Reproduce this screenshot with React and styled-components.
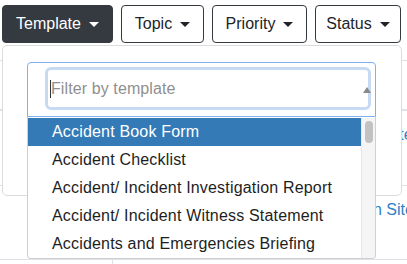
import React from "react";
import styled, { createGlobalStyle } from "styled-components";

const GlobalStyle = createGlobalStyle`
  * { box-sizing: border-box; }
  html, body { margin: 0; padding: 0; background: #fff; }
  body { font-family: "Liberation Sans", Arial, sans-serif; font-size: 16px; color: #212529; }
`;

const Page = styled.div`
  position: relative;
  width: 407px;
  height: 264px;
  overflow: hidden;
  background: #fff;
`;

const Toolbar = styled.div`
  display: flex;
  gap: 8px;
  padding: 5px 0 0 2px;
  height: 43px;
`;

const FilterButton = styled.button`
  display: flex;
  align-items: center;
  justify-content: center;
  width: ${(p) => p.$w}px;
  height: 38px;
  padding: 0;
  border: 1px solid #343a40;
  border-radius: 4px;
  background: ${(p) => (p.$active ? "#343a40" : "#fff")};
  color: ${(p) => (p.$active ? "#fff" : "#212529")};
  font-family: "Liberation Sans", Arial, sans-serif;
  font-size: 16px;
  line-height: 1;
`;

const Caret = styled.span`
  display: inline-block;
  margin-left: 8px;
  width: 0;
  height: 0;
  border-left: 5px solid transparent;
  border-right: 5px solid transparent;
  border-top: 5px solid currentColor;
`;

const Table = styled.div`
  display: flex;
  flex-direction: column;
`;

const Row = styled.div`
  display: grid;
  grid-template-columns: 112px 180px 1fr;
  height: ${(p) => p.$h}px;
  border-bottom: ${(p) => p.$b ?? 1}px solid #dee2e6;
`;

const Cell = styled.div`
  white-space: nowrap;
  padding: 15px 0 0 ${(p) => p.$indent || 0}px;
  border-left: ${(p) => (p.$divider ? "1px solid #dee2e6" : "none")};
  height: 100%;
`;

const LinkText = styled.span`
  color: #2f7fc6;
  font-size: 16px;
  line-height: 18px;
`;

const FilterPanel = styled.div`
  position: absolute;
  top: 45px;
  left: 2px;
  width: 400px;
  height: 151px;
  padding: 16px 0 0 24px;
  background: #fff;
  border: 1px solid #dcdcdc;
  border-radius: 5px;
  z-index: 5;
`;

const Select = styled.div`
  position: relative;
  width: 349px;
  height: 55px;
  padding: 4px 4px 6px 17px;
  border: 1px solid #7db1ef;
  border-radius: 4px 4px 0 0;
  background: #fff;
`;

const SearchField = styled.div`
  display: flex;
  align-items: center;
  height: 43px;
  padding-left: 2px;
  border: 3px solid #c6dbf3;
  border-radius: 6px;
  background: #fff;
`;

const TextCursor = styled.span`
  width: 1px;
  height: 18px;
  background: #333;
`;

const Placeholder = styled.span`
  color: #8f8f8f;
  font-size: 16px;
  letter-spacing: 0.1px;
`;

const UpArrow = styled.span`
  position: absolute;
  right: 4px;
  top: 24px;
  width: 0;
  height: 0;
  border-left: 4px solid transparent;
  border-right: 4px solid transparent;
  border-bottom: 6px solid #8a8a8a;
`;

const Listbox = styled.div`
  position: absolute;
  top: calc(100% + 1px);
  left: -1px;
  width: 349px;
  height: 142px;
  display: flex;
  padding-top: 1px;
  background: #fff;
  border: 1px solid #cfcfcf;
  border-top: none;
  border-radius: 0 0 4px 4px;
  overflow: hidden;
`;

const Options = styled.ul`
  flex: 1;
  margin: 0;
  padding: 0;
  list-style: none;
  overflow: hidden;
`;

const Option = styled.li`
  height: 28px;
  line-height: 28px;
  padding-left: 24px;
  white-space: nowrap;
  font-size: 16px;
  letter-spacing: 0.18px;
  background: ${(p) => (p.$highlighted ? "#337ab7" : "transparent")};
  color: ${(p) => (p.$highlighted ? "#fff" : "#1e1e1e")};
`;

const ScrollTrack = styled.div`
  width: 14px;
  background: #f5f5f5;
  border-left: 1px solid #e8e8e8;
  padding: 3px 0 0 3px;
`;

const ScrollThumb = styled.div`
  width: 8px;
  height: 22px;
  border-radius: 4px;
  background: #c2c2c2;
`;

const filters = [
  { label: "Template", w: 111, active: true },
  { label: "Topic", w: 83 },
  { label: "Priority", w: 95 },
  { label: "Status", w: 86 },
];

const templates = [
  "Accident Book Form",
  "Accident Checklist",
  "Accident/ Incident Investigation Report",
  "Accident/ Incident Witness Statement",
  "Accidents and Emergencies Briefing",
  "Alcohol and Drugs Policy",
];

export default function App() {
  return (
    <>
      <GlobalStyle />
      <Page>
        <Toolbar>
          {filters.map((f) => (
            <FilterButton key={f.label} $w={f.w} $active={f.active}>
              {f.label}
              <Caret />
            </FilterButton>
          ))}
        </Toolbar>
        <Table>
          <Row $h={18}>
            <Cell />
            <Cell />
            <Cell />
          </Row>
          <Row $h={50} $b={2}>
            <Cell />
            <Cell />
            <Cell />
          </Row>
          <Row $h={75}>
            <Cell />
            <Cell />
            <Cell $indent={93}>
              <LinkText>Site Inspection</LinkText>
            </Cell>
          </Row>
          <Row $h={74}>
            <Cell />
            <Cell />
            <Cell $indent={0}>
              <LinkText>Construction Site</LinkText>
            </Cell>
          </Row>
          <Row $h={40} $b={0}>
            <Cell />
            <Cell $divider />
            <Cell />
          </Row>
        </Table>
        <FilterPanel>
          <Select>
            <SearchField>
              <TextCursor />
              <Placeholder>Filter by template</Placeholder>
            </SearchField>
            <UpArrow />
            <Listbox>
              <Options>
                {templates.map((t, i) => (
                  <Option key={t} $highlighted={i === 0}>
                    {t}
                  </Option>
                ))}
              </Options>
              <ScrollTrack>
                <ScrollThumb />
              </ScrollTrack>
            </Listbox>
          </Select>
        </FilterPanel>
      </Page>
    </>
  );
}
